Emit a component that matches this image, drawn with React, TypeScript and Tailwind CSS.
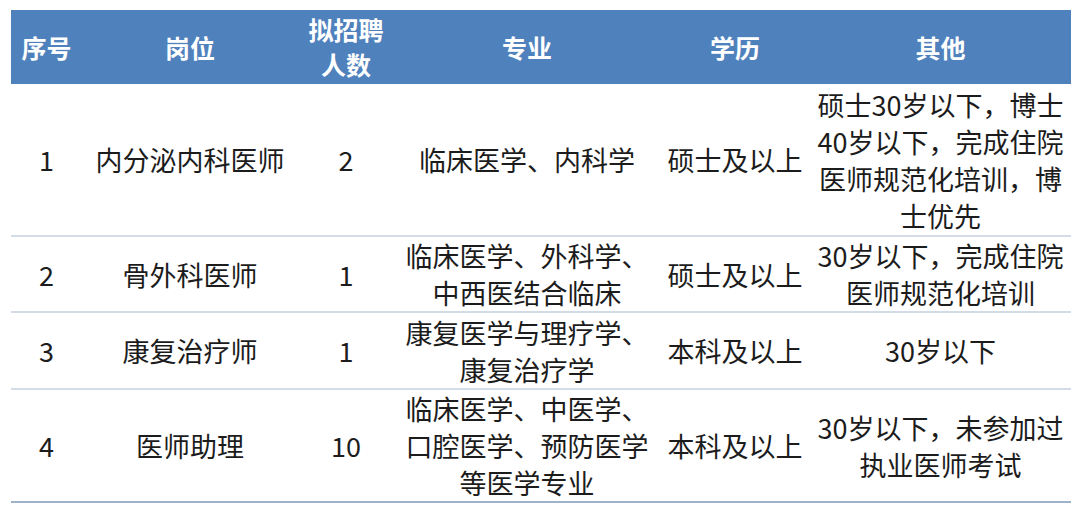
import React from "react";

interface Row {
  no: string;
  post: string;
  count: string;
  major: string[];
  degree: string;
  other: string[];
  height: string;
}

const rows: Row[] = [
  {
    no: "1",
    post: "内分泌内科医师",
    count: "2",
    major: ["临床医学、内科学"],
    degree: "硕士及以上",
    other: ["硕士30岁以下，博士", "40岁以下，完成住院", "医师规范化培训，博", "士优先"],
    height: "h-[152px]",
  },
  {
    no: "2",
    post: "骨外科医师",
    count: "1",
    major: ["临床医学、外科学、", "中西医结合临床"],
    degree: "硕士及以上",
    other: ["30岁以下，完成住院", "医师规范化培训"],
    height: "h-[75px]",
  },
  {
    no: "3",
    post: "康复治疗师",
    count: "1",
    major: ["康复医学与理疗学、", "康复治疗学"],
    degree: "本科及以上",
    other: ["30岁以下"],
    height: "h-[77px]",
  },
  {
    no: "4",
    post: "医师助理",
    count: "10",
    major: ["临床医学、中医学、", "口腔医学、预防医学", "等医学专业"],
    degree: "本科及以上",
    other: ["30岁以下，未参加过", "执业医师考试"],
    height: "h-[113px]",
  },
];

const Lines: React.FC<{ lines: string[] }> = ({ lines }) => (
  <>
    {lines.map((l, i) => (
      <div key={i} className="whitespace-nowrap">
        {l}
      </div>
    ))}
  </>
);

export default function App() {
  return (
    <div
      className="w-[1080px] h-[511px] bg-white pt-[10px] pl-[11px]"
      style={{ fontFamily: '"Noto Sans CJK SC", "Noto Sans", sans-serif' }}
    >
      <table className="w-[1060px] border-collapse table-fixed text-[27px] leading-[37px] text-[#1c1c1c]">
        <colgroup>
          <col className="w-[71px]" />
          <col className="w-[216px]" />
          <col className="w-[96px]" />
          <col className="w-[266px]" />
          <col className="w-[150px]" />
          <col className="w-[261px]" />
        </colgroup>
        <thead>
          <tr className="h-[74px] bg-[#4f81bd] text-white text-[25px] leading-[35px]">
            <th className="p-0 text-center font-bold">序号</th>
            <th className="p-0 text-center font-bold">岗位</th>
            <th className="p-0 text-center font-bold">
              <div>拟招聘</div>
              <div>人数</div>
            </th>
            <th className="p-0 text-center font-bold">专业</th>
            <th className="p-0 text-center font-bold">学历</th>
            <th className="p-0 text-center font-bold">其他</th>
          </tr>
        </thead>
        <tbody>
          {rows.map((r, i) => (
            <tr
              key={r.no}
              className={`${r.height} border-b-2 ${
                i === rows.length - 1 ? "border-[#9fb2cb]" : "border-[#d3dbe6]"
              }`}
            >
              <td className="p-0 text-center">{r.no}</td>
              <td className="p-0 text-center">{r.post}</td>
              <td className="p-0 text-center">{r.count}</td>
              <td className="p-0 text-center">
                <Lines lines={r.major} />
              </td>
              <td className="p-0 text-center">{r.degree}</td>
              <td className="p-0 text-center">
                <Lines lines={r.other} />
              </td>
            </tr>
          ))}
        </tbody>
      </table>
    </div>
  );
}
